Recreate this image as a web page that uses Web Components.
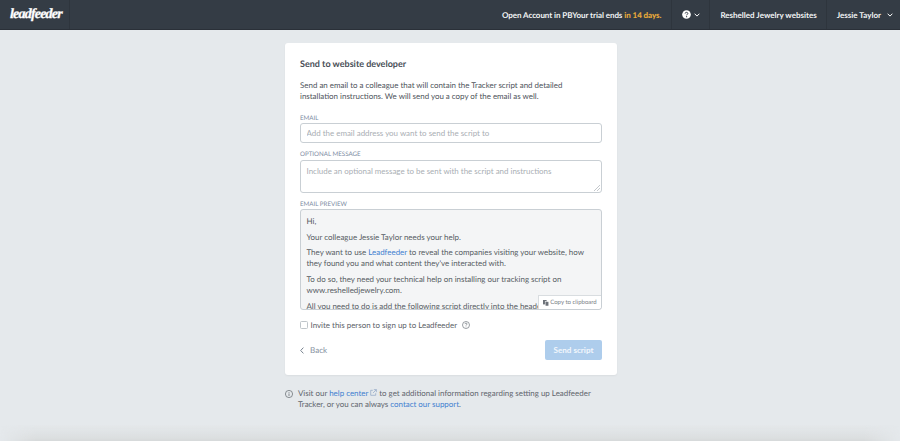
<!DOCTYPE html>
<html lang="en">
<head>
<meta charset="utf-8">
<title>Send to website developer</title>
<style>
  html, body { margin: 0; height: 100%; }
  body { font-family: "Lato", "Open Sans", sans-serif; color: #4d535b; background: #e5e9ec; overflow: hidden; text-rendering: geometricPrecision; }
  a { color: #3f7fd0; text-decoration: none; }
  lf-nav-item.snug { padding-right: 9px; }
</style>
</head>
<body>
<lf-app>
  <lf-topbar slot="top">
    <lf-nav-item>Open Account in PBYour trial ends&nbsp;<b>in 14 days.</b></lf-nav-item>
    <lf-nav-item class="snug" caret tight><svg width="9" height="9" viewBox="0 0 10 10"><circle cx="5" cy="5" r="4.8" fill="#fff"/><path d="M3.5 3.9c.1-.9.7-1.3 1.5-1.3s1.5.5 1.5 1.2c0 1.1-1.4 1.1-1.4 2.1" fill="none" stroke="#343c45" stroke-width="1.1"/><circle cx="5.1" cy="7.4" r=".7" fill="#343c45"/></svg></lf-nav-item>
    <lf-nav-item class="snug">Reshelled Jewelry websites</lf-nav-item>
    <lf-nav-item caret last>Jessie Taylor</lf-nav-item>
  </lf-topbar>
  <lf-card heading="Send to website developer">
    <p>Send an email to a colleague that will contain the Tracker script and detailed installation instructions. We will send you a copy of the email as well.</p>
    <lf-field label="Email" placeholder="Add the email address you want to send the script to"></lf-field>
    <lf-field label="Optional message" placeholder="Include an optional message to be sent with the script and instructions" multiline></lf-field>
    <lf-preview label="Email preview">
      <p>Hi,</p>
      <p>Your colleague Jessie Taylor needs your help.</p>
      <p>They want to use <a href="#">Leadfeeder</a> to reveal the companies visiting your website, how they found you and what content they've interacted with.</p>
      <p>To do so, they need your technical help on installing our tracking script on www.reshelledjewelry.com.</p>
      <p>All you need to do is add the following script directly into the header of your website.</p>
    </lf-preview>
    <lf-invite>Invite this person to sign up to Leadfeeder</lf-invite>
    <lf-actions></lf-actions>
  </lf-card>
  <lf-note>Visit our <a href="#">help center <svg width="7" height="7" viewBox="0 0 8 8" fill="none" stroke="#8fa6c4" stroke-width=".8"><path d="M6.5 4.8v2.4H.8V1.5h2.4M4.4.7h2.9v2.9M7.2.8 3.4 4.6"/></svg></a> to get additional information regarding setting up Leadfeeder Tracker, or you can always <a href="#">contact our support</a>.</lf-note>
</lf-app>

<script>
class LfApp extends HTMLElement {
  constructor() {
    super();
    this.attachShadow({ mode: "open" });
    this.shadowRoot.innerHTML = `
    <style>
      :host { display: flex; flex-direction: column; height: 441px; position: relative; overflow: hidden; }
      main { display: flex; flex-direction: column; align-items: center; padding: 13px 0 0 2px; }
      .vignette {
        position: absolute; left: 0; right: 0; bottom: 0; height: 30px; pointer-events: none;
        background: linear-gradient(180deg, transparent 0, transparent 45%, #dcdfe0 90%, #d6d9da 100%);
        -webkit-mask-image: linear-gradient(90deg, transparent 0, #000 35px, #000 calc(100% - 35px), transparent 100%);
        mask-image: linear-gradient(90deg, transparent 0, #000 35px, #000 calc(100% - 35px), transparent 100%);
      }
    </style>
    <slot name="top"></slot>
    <main><slot></slot></main>
    <div class="vignette"></div>`;
  }
}

class LfTopbar extends HTMLElement {
  constructor() {
    super();
    this.attachShadow({ mode: "open" });
    this.shadowRoot.innerHTML = `
    <style>
      :host { display: flex; height: 29px; background: #343c45; border-bottom: 1px solid #2a3038; flex: none; }
      .logo {
        display: flex; align-items: center; width: 59px; padding-left: 10px;
        border-right: 1px solid #2e353d; flex: none; white-space: nowrap;
        font: italic bold 14px "Liberation Serif", serif; letter-spacing: -.8px; color: #fff;
        -webkit-text-stroke: .3px #fff;
      }
      .nav { display: flex; margin-left: auto; height: 100%; }
    </style>
    <div class="logo">leadfeeder</div>
    <div class="nav"><slot></slot></div>`;
  }
}

class LfNavItem extends HTMLElement {
  constructor() {
    super();
    this.attachShadow({ mode: "open" });
    const caret = this.hasAttribute("caret") ? `<svg class="caret" width="6" height="4" viewBox="0 0 6 4"><path d="M.6.7 3 3.1 5.4.7" fill="none" stroke="#fff" stroke-width="1"/></svg>` : "";
    this.shadowRoot.innerHTML = `
    <style>
      :host {
        display: flex; align-items: center; padding: 0 10px; height: 100%;
        font: bold 8px "Lato", sans-serif; color: #f1f3f4; white-space: pre;
        border-left: 1px solid #2e353d;
      }
      :host(:first-child) { border-left: 0; letter-spacing: -.06px; }
      :host([last]) { padding-right: 7px; }
      :host([tight]) .caret { margin-left: 3px; }
      ::slotted(b) { color: #e9a93a; }
      .caret { margin-left: 6px; }
    </style>
    <slot></slot>${caret}`;
  }
}

class LfCard extends HTMLElement {
  constructor() {
    super();
    this.attachShadow({ mode: "open" });
    this.shadowRoot.innerHTML = `
    <style>
      :host {
        display: block; width: 302px; height: 302px; padding: 15px; background: #fff; border-radius: 3px;
        box-shadow: 0 1px 2px #0000000d; font: 7.95px/11px "Lato", sans-serif; color: #4d535b;
      }
      h2 { margin: 0 0 10.5px; font: bold 9px/11px "Lato", sans-serif; color: #484e56; }
      ::slotted(p) { margin: 0 0 13px; }
    </style>
    <h2>${this.getAttribute("heading")}</h2>
    <slot></slot>`;
  }
}

class LfLabel extends HTMLElement {
  constructor() {
    super();
    this.attachShadow({ mode: "open" });
    this.shadowRoot.innerHTML = `
    <style>
      :host { display: block; font: 6.2px/8px "Lato", sans-serif; color: #7d8ca3; text-transform: uppercase; margin-bottom: .5px; }
    </style>
    <slot></slot>`;
  }
}

class LfField extends HTMLElement {
  constructor() {
    super();
    this.attachShadow({ mode: "open" });
    const ph = this.getAttribute("placeholder");
    const control = this.hasAttribute("multiline")
      ? `<textarea placeholder="${ph}"></textarea>`
      : `<input type="text" placeholder="${ph}">`;
    this.shadowRoot.innerHTML = `
    <style>
      :host { display: block; margin-bottom: 8px; }
      input, textarea {
        display: block; width: 100%; box-sizing: border-box; margin: 0; padding: 0 5.5px;
        border: 1px solid #c9cfd4; border-radius: 3px; background: #fff; outline: 0;
        font: 7.95px/11px "Lato", sans-serif; color: #4d535b;
      }
      input { height: 20px; }
      textarea { height: 33px; padding-top: 5px; }
      textarea::-webkit-resizer {
        background: linear-gradient(135deg, transparent 50%, #c4c8cc 50% 58%, transparent 58% 74%, #c4c8cc 74% 82%, transparent 82%) right 1px bottom 1px / 7px 7px no-repeat;
      }
      ::placeholder { color: #a9aeb3; opacity: 1; }
    </style>
    <lf-label>${this.getAttribute("label")}</lf-label>
    ${control}`;
  }
}

class LfPreview extends HTMLElement {
  constructor() {
    super();
    this.attachShadow({ mode: "open" });
    this.shadowRoot.innerHTML = `
    <style>
      :host { display: block; margin: 7px 0 9px; }
      .box {
        position: relative; height: 101px; box-sizing: border-box; overflow: hidden;
        border: 1px solid #c9cfd4; border-radius: 3px; background: #f4f5f6;
      }
      .body { padding: 6px 5.5px; height: 100%; box-sizing: border-box; overflow: hidden; color: #565c63; }
      ::slotted(p) { margin: 0 0 4.7px; }
      ::slotted(p:last-child) { white-space: nowrap; }
      .copy {
        position: absolute; right: 0; bottom: 0; width: 63px; height: 14px; box-sizing: border-box;
        display: flex; align-items: center; justify-content: center; gap: 1px;
        background: #fff; border: 1px solid #d9dde0; border-right: 0; border-bottom: 0;
        font: 6px "Lato", sans-serif; color: #7b8188;
      }
      .copy svg { flex: none; }
    </style>
    <lf-label>${this.getAttribute("label")}</lf-label>
    <div class="box">
      <div class="body"><slot></slot></div>
      <div class="copy"><svg width="6" height="6" viewBox="0 0 6 6"><rect x="0" y="0" width="3.6" height="4.4" fill="#6c7178"/><rect x="2.2" y="1.6" width="3.6" height="4.4" fill="#6c7178" stroke="#fff" stroke-width=".5"/></svg>Copy to clipboard</div>
    </div>`;
  }
}

class LfInvite extends HTMLElement {
  constructor() {
    super();
    this.attachShadow({ mode: "open" });
    this.shadowRoot.innerHTML = `
    <style>
      :host { display: flex; align-items: center; height: 12px; color: #5b6168; }
      .check { width: 8px; height: 8px; box-sizing: border-box; border: 1px solid #bfc5ca; border-radius: 1.5px; margin-right: 2.5px; background: #fff; flex: none; }
      svg { margin-left: 5px; }
    </style>
    <span class="check"></span><slot></slot>
    <svg width="8" height="8" viewBox="0 0 8 8" fill="none" stroke="#6f757c" stroke-width=".7"><circle cx="4" cy="4" r="3.5"/><path d="M2.9 3.1c0-.6.5-1 1.1-1s1.1.4 1.1.9c0 .8-1.1.8-1.1 1.6"/><path d="M4 5.6v.6"/></svg>`;
  }
}

class LfActions extends HTMLElement {
  constructor() {
    super();
    this.attachShadow({ mode: "open" });
    this.shadowRoot.innerHTML = `
    <style>
      :host { display: flex; justify-content: space-between; align-items: center; margin-top: 9px; height: 20px; }
      .back { display: flex; align-items: center; gap: 6px; color: #87929f; font: 8.1px "Lato", sans-serif; text-decoration: none; }
      button {
        width: 57px; height: 20px; padding: 0; border: 0; border-radius: 2px; background: #aecdec; color: #f2f7fc;
        font: bold 8.1px "Lato", sans-serif;
      }
    </style>
    <a class="back" href="#"><svg width="4" height="7" viewBox="0 0 4 7"><path d="M3.4.6.7 3.5l2.7 2.9" fill="none" stroke="#78838f" stroke-width="1"/></svg>Back</a>
    <button type="button">Send script</button>`;
  }
}

class LfNote extends HTMLElement {
  constructor() {
    super();
    this.attachShadow({ mode: "open" });
    this.shadowRoot.innerHTML = `
    <style>
      :host { display: flex; width: 332px; margin-top: 13px; font: 7.95px/11px "Lato", sans-serif; color: #5f656c; box-sizing: border-box; }
      svg { flex: none; margin: 1.5px 5px 0 0; }
    </style>
    <svg width="8" height="8" viewBox="0 0 8 8" fill="none" stroke="#5f656c" stroke-width=".7"><circle cx="4" cy="4" r="3.6"/><path d="M4 3.4v2.6M4 2v.8"/></svg>
    <div><slot></slot></div>`;
  }
}

customElements.define("lf-app", LfApp);
customElements.define("lf-topbar", LfTopbar);
customElements.define("lf-nav-item", LfNavItem);
customElements.define("lf-card", LfCard);
customElements.define("lf-label", LfLabel);
customElements.define("lf-field", LfField);
customElements.define("lf-preview", LfPreview);
customElements.define("lf-invite", LfInvite);
customElements.define("lf-actions", LfActions);
customElements.define("lf-note", LfNote);
</script>
</body>
</html>
